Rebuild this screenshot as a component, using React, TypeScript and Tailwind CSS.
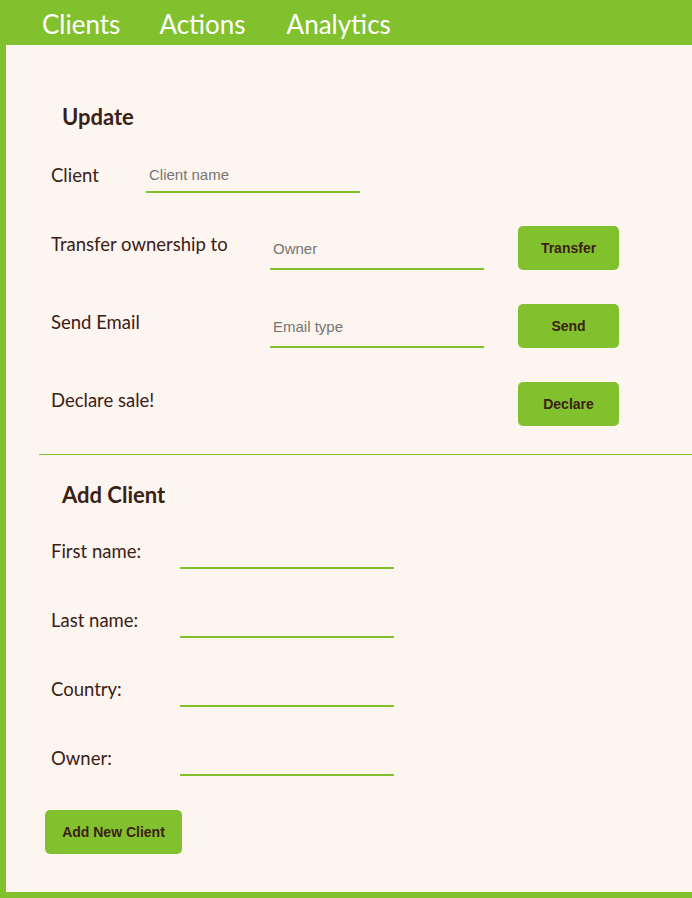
import React from "react";

const label = "text-[18.5px] leading-6 text-[#3b2016] font-['Lato','Open_Sans',sans-serif]";
const inputCls =
  "w-[214px] bg-transparent border-0 border-b-2 border-[#82c12e] outline-none px-[3px] text-[15px] font-['Liberation_Sans',Arial,sans-serif] text-[#3b2016] placeholder:text-[#757575]";
const btn =
  "h-[44px] rounded-[5px] bg-[#82c12e] text-[14px] font-bold text-[#3b2016] font-['Liberation_Sans',Arial,sans-serif]";

export default function App() {
  return (
    <div className="w-[692px] h-[898px] bg-[#82c12e] flex flex-col">
      <nav className="h-[45px] flex items-center pl-[42px] text-white text-[26px] font-['Lato','Open_Sans',sans-serif] leading-none pt-[2px]">
        <span>Clients</span>
        <span className="ml-[39px]">Actions</span>
        <span className="ml-[41px]">Analytics</span>
      </nav>
      <div className="flex-1 ml-[6px] mb-[6px] bg-[#fdf5ef] flex flex-col">
        <h2 className="mt-[60px] ml-[56px] text-[22px] leading-6 font-bold text-[#3b2016] font-['Lato','Open_Sans',sans-serif]">
          Update
        </h2>
        <div className="ml-[45px] mt-[20px] flex items-end h-[44px]">
          <span className={`${label} w-[95px] pb-[6px]`}>Client</span>
          <input className={`${inputCls} h-[36px]`} placeholder="Client name" />
        </div>
        <div className="ml-[45px] mt-[33px] flex flex-col gap-[34px]">
          <div className="flex items-center h-[44px]">
            <span className={`${label} w-[219px] pb-[8px]`}>Transfer ownership to</span>
            <input className={`${inputCls} h-[44px] pt-[2px]`} placeholder="Owner" />
            <button className={`${btn} ml-[34px] w-[101px]`}>Transfer</button>
          </div>
          <div className="flex items-center h-[44px]">
            <span className={`${label} w-[219px] pb-[8px]`}>Send Email</span>
            <input className={`${inputCls} h-[44px] pt-[2px]`} placeholder="Email type" />
            <button className={`${btn} ml-[34px] w-[101px]`}>Send</button>
          </div>
          <div className="flex items-center h-[44px]">
            <span className={`${label} w-[219px] pb-[8px]`}>Declare sale!</span>
            <div className="w-[214px]" />
            <button className={`${btn} ml-[34px] w-[101px]`}>Declare</button>
          </div>
        </div>
        <div className="ml-[33px] mt-[28px] h-[1px] bg-[#7fc12a]" />
        <h2 className="mt-[28px] ml-[56px] text-[22px] leading-6 font-bold text-[#3b2016] font-['Lato','Open_Sans',sans-serif]">
          Add Client
        </h2>
        <div className="ml-[45px] mt-[26px] flex flex-col gap-[33px]">
          {["First name:", "Last name:", "Country:", "Owner:"].map((t) => (
            <div key={t} className="flex items-end h-[36px]">
              <span className={`${label} w-[129px] pb-[6px]`}>{t}</span>
              <input className={`${inputCls} h-[36px]`} />
            </div>
          ))}
        </div>
        <div className="ml-[39px] mt-[34px]">
          <button className={`${btn} w-[137px]`}>Add New Client</button>
        </div>
      </div>
    </div>
  );
}
